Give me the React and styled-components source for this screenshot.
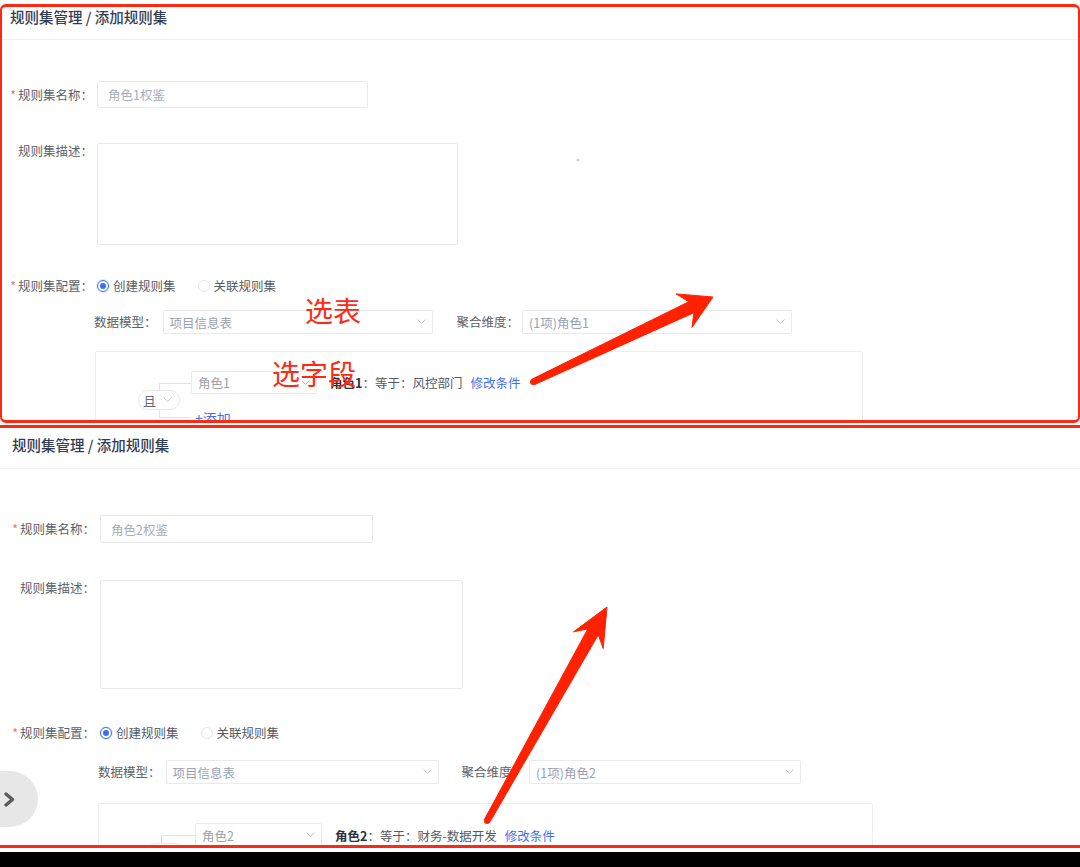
import React from 'react';
import styled, { createGlobalStyle, ThemeProvider } from 'styled-components';

const GlobalStyle = createGlobalStyle`
  html, body { margin: 0; padding: 0; background: #fff; overflow: hidden; }
  body { font-family: "Noto Sans CJK SC", "Noto Sans", sans-serif; -webkit-font-smoothing: antialiased; }
  * { box-sizing: border-box; }
`;

const topMetrics = {
  headerH: 33, headerPadTop: 0, headerPadX: 8,
  labelW: 91, labelGap: 4,
  nameTop: 41, inputW: 271, inputH: 27,
  descGap: 35, areaW: 361, areaH: 102,
  configGap: 31, configH: 20,
  modelGap: 14, modelIndent: 92, modelLabelGap: 6, selW: 270, selH: 24, groupGap: 24, sel2Gap: 3, sel2W: 270,
  boxGap: 17, boxIndent: 93, boxW: 768, boxPadTop: 19,
  pillLeft: 42, pillW: 42, pillH: 20, lineOffset: 21, bracketW: 32, bracketH: 35,
  itemSelW: 126, itemSelH: 23, addGap: 14,
};

const bottomMetrics = {
  headerH: 41, headerPadTop: 7, headerPadX: 12,
  labelW: 95, labelGap: 5,
  nameTop: 46, inputW: 273, inputH: 28,
  descGap: 37, areaW: 363, areaH: 109,
  configGap: 34, configH: 20,
  modelGap: 17, modelIndent: 98, modelLabelGap: 5, selW: 273, selH: 24, groupGap: 23, sel2Gap: 5, sel2W: 272,
  boxGap: 19, boxIndent: 98, boxW: 775, boxPadTop: 19,
  pillLeft: 45, pillW: 42, pillH: 21, lineOffset: 17, bracketW: 34, bracketH: 37,
  itemSelW: 127, itemSelH: 24, addGap: 15,
};

const Page = styled.div`
  position: relative;
  width: 1080px;
  height: 867px;
  overflow: hidden;
  background: #fff;
  padding-top: 4px;
  display: flex;
  flex-direction: column;
`;

const Shot = styled.section`
  position: relative;
  flex: none;
  height: ${p => p.$h}px;
  margin-bottom: ${p => p.$mb}px;
  overflow: hidden;
  background: #fff;
  border: 3px solid #fb2a10;
  border-left-width: ${p => p.$side}px;
  border-right-width: ${p => p.$side}px;
  border-radius: ${p => p.$radius}px;
`;

const BlackBar = styled.div`
  flex: none;
  height: 15px;
  margin-top: auto;
  background: #000;
`;

const Header = styled.header`
  height: ${p => p.theme.headerH}px;
  padding: ${p => p.theme.headerPadTop}px ${p => p.theme.headerPadX}px 0;
  border-bottom: 1px solid #eef0f3;
  font-size: 14.5px;
  line-height: 20px;
  font-weight: 500;
  color: #313c55;
`;

const Form = styled.div`
  font-size: 12.5px;
  color: #5a5f68;
`;

const NameRow = styled.div`
  display: flex;
  align-items: center;
  margin-top: ${p => p.theme.nameTop}px;
`;

const DescRow = styled.div`
  display: flex;
  align-items: flex-start;
  margin-top: ${p => p.theme.descGap}px;
`;

const ConfigRow = styled.div`
  display: flex;
  align-items: center;
  height: ${p => p.theme.configH}px;
  margin-top: ${p => p.theme.configGap}px;
`;

const Label = styled.label`
  flex: none;
  width: ${p => p.theme.labelW}px;
  margin-right: ${p => p.theme.labelGap}px;
  text-align: right;
  line-height: 16px;
  white-space: nowrap;
`;

const Req = styled.span`
  color: #f56c6c;
  margin-right: 2px;
`;

const TextInput = styled.input`
  flex: none;
  width: ${p => p.theme.inputW}px;
  height: ${p => p.theme.inputH}px;
  padding: 0 10px;
  border: 1px solid #e7e9ed;
  border-radius: 2px;
  font: inherit;
  font-size: 12.5px;
  outline: none;
  background: #fff;
  &::placeholder { color: #a6adbd; }
`;

const TextArea = styled.textarea`
  flex: none;
  width: ${p => p.theme.areaW}px;
  height: ${p => p.theme.areaH}px;
  border: 1px solid #e8e9ec;
  border-radius: 2px;
  resize: none;
  outline: none;
  font: inherit;
`;

const RadioGroup = styled.div`
  display: flex;
  align-items: center;
  gap: 22px;
`;

const RadioItem = styled.span`
  display: flex;
  align-items: center;
  gap: 4px;
  color: #555a63;
  line-height: 16px;
`;

const RadioDot = styled.span`
  position: relative;
  width: 12px;
  height: 12px;
  border-radius: 50%;
  border: 1px solid ${p => (p.$on ? '#3d6ff2' : '#e3e5ea')};
  background: #fff;
  box-shadow: ${p => (p.$on ? '0 0 0 1px rgba(61,111,242,0.15)' : 'none')};
  &::after {
    content: '';
    position: absolute;
    inset: 2px;
    border-radius: 50%;
    background: ${p => (p.$on ? '#3d6ff2' : 'transparent')};
  }
`;

const ModelRow = styled.div`
  display: flex;
  align-items: center;
  margin-top: ${p => p.theme.modelGap}px;
  padding-left: ${p => p.theme.modelIndent}px;
`;

const FieldLabel = styled.span`
  flex: none;
  line-height: 16px;
  margin-right: ${p => p.$gap}px;
  margin-left: ${p => p.$ml || 0}px;
  white-space: nowrap;
`;

const Select = styled.div`
  flex: none;
  display: flex;
  align-items: center;
  justify-content: space-between;
  width: ${p => p.$w}px;
  height: ${p => p.theme.selH}px;
  padding: 0 6px 0 6px;
  border: 1px solid #e8eaee;
  border-radius: 2px;
  background: #fff;
  color: #99a1b3;
`;

const CondBox = styled.div`
  width: ${p => p.theme.boxW}px;
  height: 200px;
  margin-top: ${p => p.theme.boxGap}px;
  margin-left: ${p => p.theme.boxIndent}px;
  padding: ${p => p.theme.boxPadTop}px 0 0 ${p => p.theme.pillLeft}px;
  border: 1px solid #eceef2;
  border-radius: 2px;
`;

const Tree = styled.div`
  display: flex;
  align-items: flex-start;
`;

const LogicPill = styled.div`
  position: relative;
  z-index: 1;
  flex: none;
  display: flex;
  align-items: center;
  justify-content: space-between;
  width: ${p => p.theme.pillW}px;
  height: ${p => p.theme.pillH}px;
  margin-top: ${p => p.theme.itemSelH / 2 + p.theme.bracketH / 2 - p.theme.pillH / 2}px;
  margin-right: ${p => -(p.theme.pillW - p.theme.lineOffset)}px;
  padding: 0 7px 0 4px;
  border: 1px solid #e6e8ec;
  border-radius: ${p => p.theme.pillH / 2}px;
  background: #fff;
  color: #666b73;
  font-size: 13px;
`;

const Bracket = styled.div`
  flex: none;
  width: ${p => p.theme.bracketW}px;
  height: ${p => p.theme.bracketH}px;
  margin-top: ${p => p.theme.itemSelH / 2}px;
  border: 1px solid #dfe2e7;
  border-right: none;
`;

const Items = styled.div`
  display: flex;
  flex-direction: column;
  gap: ${p => p.theme.addGap}px;
`;

const CondRow = styled.div`
  display: flex;
  align-items: center;
`;

const ItemSelect = styled.div`
  flex: none;
  display: flex;
  align-items: center;
  justify-content: space-between;
  width: ${p => p.theme.itemSelW}px;
  height: ${p => p.theme.itemSelH}px;
  padding: 0 6px;
  border: 1px solid #e8eaee;
  border-radius: 2px;
  color: #9da1a8;
`;

const CondText = styled.span`
  margin-left: 13px;
  color: #555a62;
  white-space: nowrap;
  b { color: #2f3237; font-weight: 700; }
`;

const Link = styled.span`
  margin-left: 8px;
  color: #3f70f4;
  white-space: nowrap;
`;

const AddLink = styled.span`
  padding-left: 4px;
  line-height: 20px;
  color: #3f70f4;
  font-size: 14px;
`;

const SideToggle = styled.div`
  position: absolute;
  left: 0;
  top: 343px;
  width: 38px;
  height: 56px;
  border-radius: 0 28px 28px 0;
  background: #e7e7e7;
  display: flex;
  align-items: center;
  padding-left: 3px;
`;

const Note = styled.span`
  position: absolute;
  z-index: 4;
  left: ${p => p.$x}px;
  top: ${p => p.$y}px;
  font-size: 28px;
  line-height: 1;
  color: #ff2a12;
  pointer-events: none;
  white-space: nowrap;
`;

const Overlay = styled.svg`
  position: absolute;
  left: 0;
  top: 0;
  z-index: 5;
  pointer-events: none;
`;

const Chevron = ({ w = 9, color = '#c0c4cc' }) => (
  <svg width={w} height={w * 0.6} viewBox="0 0 10 6" fill="none">
    <polyline points="1,1 5,5 9,1" stroke={color} strokeWidth="1.1" strokeLinecap="round" strokeLinejoin="round" />
  </svg>
);

function arrowPoints({ tail, tip, head, headW, w0, w1, notch = 0.75 }) {
  const dx = tip[0] - tail[0];
  const dy = tip[1] - tail[1];
  const L = Math.hypot(dx, dy);
  const ux = dx / L, uy = dy / L;
  const px = -uy, py = ux;
  const base = [tip[0] - ux * head, tip[1] - uy * head];
  const neck = [tip[0] - ux * head * notch, tip[1] - uy * head * notch];
  const at = (c, s, w) => [c[0] + px * w * s, c[1] + py * w * s];
  return [
    at(tail, 1, w0 / 2), at(neck, 1, w1 / 2), at(base, 1, headW / 2), tip,
    at(base, -1, headW / 2), at(neck, -1, w1 / 2), at(tail, -1, w0 / 2),
  ].map(p => p.map(v => v.toFixed(1)).join(',')).join(' ');
}

const Arrow = ({ spec }) => (
  <g fill="#ff2200">
    <polygon points={arrowPoints(spec)} strokeLinejoin="round" stroke="#ff2200" strokeWidth="1" />
    <circle cx={spec.tail[0]} cy={spec.tail[1]} r={spec.w0 / 2} />
  </g>
);

const arrows = [
  { tail: [533, 382], tip: [713, 297], head: 32, headW: 37, w0: 6, w1: 12 },
  { tail: [487, 821], tip: [607, 607], head: 38, headW: 34, w0: 6, w1: 12 },
];

const MetricsContext = React.createContext(topMetrics);

function ModelFields({ model, dim }) {
  const t = React.useContext(MetricsContext);
  return (
    <ModelRow>
      <FieldLabel $gap={t.modelLabelGap}>数据模型：</FieldLabel>
      <Select $w={t.selW}>{model}<Chevron w={9} /></Select>
      <FieldLabel $gap={t.sel2Gap} $ml={t.groupGap}>聚合维度：</FieldLabel>
      <Select $w={t.sel2W}>{dim}<Chevron w={9} /></Select>
    </ModelRow>
  );
}

function RuleForm({ name, model, dim, role, value }) {
  return (
    <Form>
      <NameRow>
        <Label><Req>*</Req>规则集名称：</Label>
        <TextInput placeholder={name} readOnly />
      </NameRow>
      <DescRow>
        <Label>规则集描述：</Label>
        <TextArea readOnly />
      </DescRow>
      <ConfigRow>
        <Label><Req>*</Req>规则集配置：</Label>
        <RadioGroup>
          <RadioItem><RadioDot $on />创建规则集</RadioItem>
          <RadioItem><RadioDot />关联规则集</RadioItem>
        </RadioGroup>
      </ConfigRow>
      <ModelFields model={model} dim={dim} />
      <CondBox>
        <Tree>
          <LogicPill>且<Chevron w={9} /></LogicPill>
          <Bracket />
          <Items>
            <CondRow>
              <ItemSelect>{role}<Chevron w={9} /></ItemSelect>
              <CondText><b>{role}</b>：等于：{value}</CondText>
              <Link>修改条件</Link>
            </CondRow>
            <AddLink>+添加</AddLink>
          </Items>
        </Tree>
      </CondBox>
    </Form>
  );
}

function Screen({ metrics, h, mb, side, radius, children, ...data }) {
  return (
    <ThemeProvider theme={metrics}>
      <MetricsContext.Provider value={metrics}>
        <Shot $h={h} $mb={mb} $side={side} $radius={radius}>
          <Header>规则集管理 / 添加规则集</Header>
          <RuleForm {...data} />
          {children}
        </Shot>
      </MetricsContext.Provider>
    </ThemeProvider>
  );
}

export default function App() {
  return (
    <>
      <GlobalStyle />
      <Page>
        <Screen metrics={topMetrics} h={419} mb={2} side={2} radius={6}
          name="角色1权鉴" model="项目信息表" dim="(1项)角色1" role="角色1" value="风控部门" />
        <Screen metrics={bottomMetrics} h={423} mb={0} side={0} radius={0}
          name="角色2权鉴" model="项目信息表" dim="(1项)角色2" role="角色2" value="财务-数据开发">
          <SideToggle>
            <svg width="13" height="15" viewBox="0 0 13 15" fill="none">
              <polyline points="3,2 9.5,7.5 3,13" stroke="#5c5c5c" strokeWidth="3.4" strokeLinecap="round" strokeLinejoin="round" />
            </svg>
          </SideToggle>
        </Screen>
        <BlackBar />
        <Note $x={305} $y={296}>选表</Note>
        <Note $x={272} $y={359}>选字段</Note>
        <Overlay width="1080" height="867" viewBox="0 0 1080 867">
          {arrows.map((a, i) => <Arrow key={i} spec={a} />)}
          <circle cx="578" cy="160" r="1.3" fill="#f7b5b5" />
        </Overlay>
      </Page>
    </>
  );
}
